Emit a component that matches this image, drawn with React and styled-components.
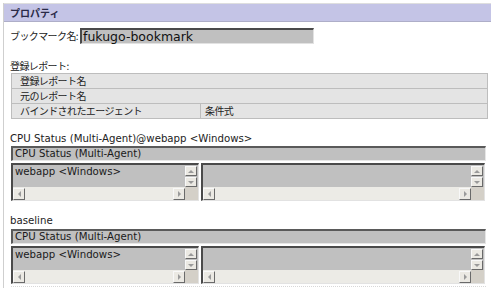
import React from 'react';
import styled, { createGlobalStyle } from 'styled-components';

const GlobalStyle = createGlobalStyle`
  body {
    margin: 0;
    background: #ffffff;
  }
`;

const jp = `'Noto Sans CJK JP', 'DejaVu Sans', sans-serif`;
const latin = `'DejaVu Sans', 'Noto Sans CJK JP', sans-serif`;

const Panel = styled.div`
  margin: 3px 0 0 3px;
  width: 488px;
  height: 285px;
  border-left: 1px solid #cfcfcf;
  box-sizing: border-box;
`;

const Header = styled.div`
  height: 17px;
  background: #c4c4e6;
  border-top: 1px solid #dedede;
  border-bottom: 1px solid #aeaec8;
  display: flex;
  align-items: center;
  padding-left: 6px;
  font-family: ${jp};
  font-size: 10px;
  font-weight: 700;
  color: #2a2a48;
`;

const Body = styled.div`
  padding-left: 6px;
  display: flex;
  flex-direction: column;
`;

const Row = styled.div`
  display: flex;
  align-items: center;
  margin-top: ${p => p.$top || 0}px;
`;

const Label = styled.div`
  font-family: ${p => (p.$latin ? latin : jp)};
  font-size: ${p => (p.$latin ? '10.2px' : '10px')};
  letter-spacing: ${p => (p.$latin ? 0 : -0.6)}px;
  color: #222;
  line-height: 12px;
  height: 12px;
  margin-top: ${p => p.$top || 0}px;
  white-space: nowrap;
`;

const TextInput = styled.div`
  margin-left: 2px;
  width: 234px;
  height: 16px;
  box-sizing: border-box;
  background: #c0c0c0;
  border-top: 2px solid #4a4a4a;
  border-left: 2px solid #4a4a4a;
  border-right: 1px solid #e2e2e2;
  border-bottom: 1px solid #e2e2e2;
  font-family: ${latin};
  font-size: 12.5px;
  line-height: 13px;
  padding-left: 1px;
  color: #111;
`;

const Table = styled.div`
  margin: 1px 0 0 1px;
  width: 475px;
  border: 1px solid #bdbdbd;
  border-bottom: none;
`;

const TableRow = styled.div`
  display: flex;
  height: 14px;
  border-bottom: 1px solid #bdbdbd;
  background: #e4e4e4;
`;

const Cell = styled.div`
  box-sizing: border-box;
  width: ${p => (p.$w ? `${p.$w}px` : 'auto')};
  flex: ${p => (p.$w ? 'none' : 1)};
  border-right: ${p => (p.$w ? '1px solid #bdbdbd' : 'none')};
  padding-left: ${p => p.$pad ?? 8}px;
  font-family: ${jp};
  font-size: 10px;
  letter-spacing: -0.6px;
  line-height: 14px;
  color: #222;
  white-space: nowrap;
`;

const Bar = styled.div`
  margin: ${p => p.$top ?? 1}px 0 0 1px;
  width: 475px;
  height: 15px;
  box-sizing: border-box;
  background: #c0c0c0;
  border-top: 2px solid #5a5a5a;
  border-left: 2px solid #5a5a5a;
  border-right: 1px solid #e6e6e6;
  border-bottom: 1px solid #e6e6e6;
  padding-left: 2px;
  font-family: ${latin};
  font-size: 10.2px;
  line-height: 12px;
  color: #1a1a1a;
`;

const Lists = styled.div`
  display: flex;
  gap: 2px;
  margin: 2px 0 0 1px;
  width: 475px;
`;

const ListBox = styled.div`
  width: ${p => p.$w}px;
  height: ${p => p.$h}px;
  box-sizing: border-box;
  border-top: 2px solid #4a4a4a;
  border-left: 2px solid #4a4a4a;
  border-right: 1px solid #e2e2e2;
  border-bottom: 1px solid #e2e2e2;
  display: grid;
  grid-template-columns: 1fr 13px;
  grid-template-rows: 1fr 13px;
  background: #c0c0c0;
`;

const ListContent = styled.div`
  padding: 1px 0 0 2px;
  font-family: ${latin};
  font-size: 10.2px;
  line-height: 12px;
  color: #1a1a1a;
`;

const VScroll = styled.div`
  display: flex;
  flex-direction: column;
  gap: 1px;
  padding-top: 1px;
`;

const HScroll = styled.div`
  background: #ecebe6;
  display: flex;
  justify-content: space-between;
  align-items: center;
`;

const Corner = styled.div`
  background: #d4d0c8;
`;

const ArrowButton = styled.div`
  width: 12px;
  height: ${p => (p.$v ? 10 : 12)}px;
  box-sizing: border-box;
  background: #ebe9e3;
  border: 1px solid #f8f8f8;
  border-right-color: #6a6a6a;
  border-bottom-color: #6a6a6a;
  display: flex;
  align-items: center;
  justify-content: center;
`;

const Footer = styled.div`
  margin: 2px 0 0 1px;
  width: 475px;
  border-top: 1px dotted #d8d8d8;
`;

const Arrow = ({ dir }) => {
  const pts = {
    up: '1,4 4,1 7,4',
    down: '1,1 4,4 7,1',
    left: '4,1 1,4 4,7',
    right: '1,1 4,4 1,7',
  }[dir];
  const horiz = dir === 'left' || dir === 'right';
  return (
    <svg width={horiz ? 5 : 8} height={horiz ? 8 : 5} viewBox={horiz ? '0 0 5 8' : '0 0 8 5'}>
      <polygon points={pts} fill="#9a9a9a" />
    </svg>
  );
};

const ScrollList = ({ width, height, text }) => (
  <ListBox $w={width} $h={height}>
    <ListContent>{text}</ListContent>
    <VScroll>
      <ArrowButton $v><Arrow dir="up" /></ArrowButton>
      <ArrowButton $v><Arrow dir="down" /></ArrowButton>
    </VScroll>
    <HScroll>
      <ArrowButton><Arrow dir="left" /></ArrowButton>
      <ArrowButton><Arrow dir="right" /></ArrowButton>
    </HScroll>
    <Corner />
  </ListBox>
);

const ReportBlock = ({ title, height, barTop }) => (
  <>
    <Bar $top={barTop}>{title}</Bar>
    <Lists>
      <ScrollList width={188} height={height} text="webapp <Windows>" />
      <ScrollList width={284} height={height} text="" />
    </Lists>
  </>
);

export default function App() {
  return (
    <>
      <GlobalStyle />
      <Panel>
        <Header>プロパティ</Header>
        <Body>
          <Row $top={6}>
            <Label>ブックマーク名:</Label>
            <TextInput>fukugo-bookmark</TextInput>
          </Row>
          <Label $top={16}>登録レポート:</Label>
          <Table>
            <TableRow><Cell>登録レポート名</Cell></TableRow>
            <TableRow><Cell>元のレポート名</Cell></TableRow>
            <TableRow>
              <Cell $w={189}>バインドされたエージェント</Cell>
              <Cell $pad={4}>条件式</Cell>
            </TableRow>
          </Table>
          <Label $latin $top={14}>CPU Status (Multi-Agent)@webapp &lt;Windows&gt;</Label>
          <ReportBlock title="CPU Status (Multi-Agent)" height={38} barTop={1} />
          <Label $latin $top={14}>baseline</Label>
          <ReportBlock title="CPU Status (Multi-Agent)" height={38} barTop={2} />
          <Footer />
        </Body>
      </Panel>
    </>
  );
}
